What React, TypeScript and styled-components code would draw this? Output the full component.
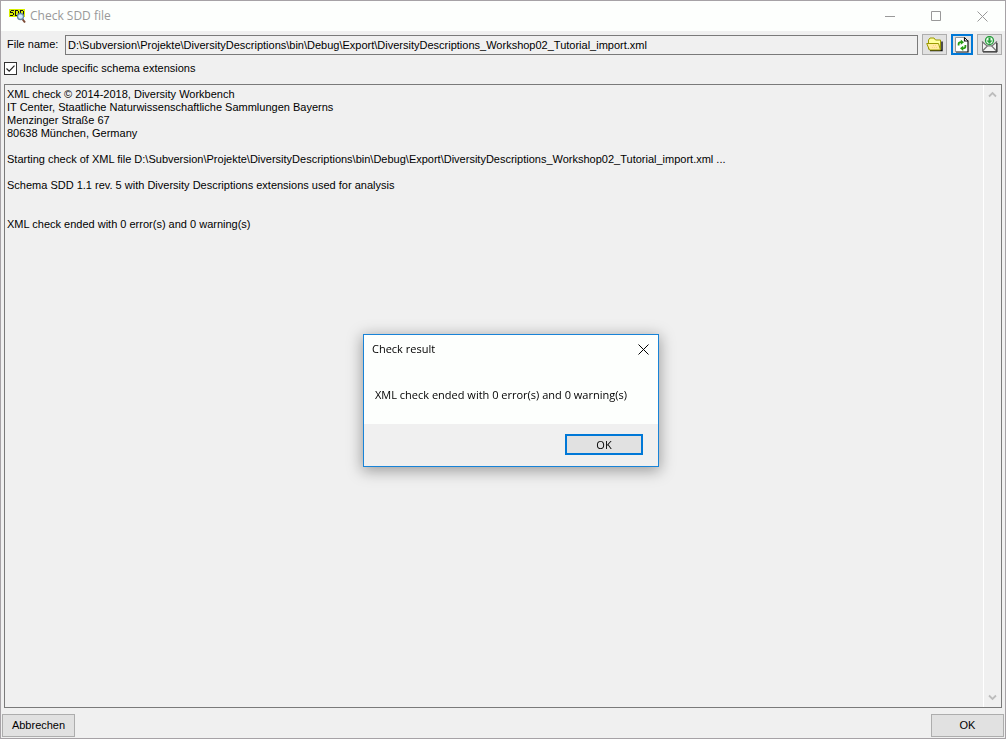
import React, { useState } from "react";
import styled, { createGlobalStyle, css } from "styled-components";

const sans = `"Liberation Sans", Arial, sans-serif`;
const uiSans = `"Open Sans", "Segoe UI", sans-serif`;

const GlobalStyle = createGlobalStyle`
  *, *::before, *::after { box-sizing: border-box; }
  body { margin: 0; background: #f0f0f0; color: #000; font: 11px/13px ${sans}; }
  svg { display: block; flex: none; }
`;

const Window = styled.main`
  min-height: 100vh;
  display: flex;
  flex-direction: column;
  border: 1px solid #a6a2a6;
  background: #f0f0f0;
`;

const TitleBar = styled.header`
  display: flex;
  align-items: center;
  height: 30px;
  padding-left: 8px;
  background: #fdfffd;
  color: #999;
  font: 12px/16px ${uiSans};
`;

const Title = styled.h1`
  flex: 1;
  margin: 0 0 0 4px;
  font: inherit;
`;

const CaptionButton = styled.button<{ $dark?: boolean }>`
  display: flex;
  align-items: center;
  justify-content: center;
  width: ${(p) => (p.$dark ? 30 : 46)}px;
  height: 28px;
  padding: 0;
  border: 0;
  background: none;
  color: ${(p) => (p.$dark ? "#000" : "#999")};
`;

const FileRow = styled.div`
  display: flex;
  align-items: center;
  padding: 3px 3px 0 6px;
`;

const FileLabel = styled.label`
  width: 58px;
  flex: none;
`;

const FileInput = styled.input`
  flex: 1;
  min-width: 0;
  height: 20px;
  padding: 0 2px;
  border: 1px solid #7a7a7a;
  background: #f0f0f0;
  color: #000;
  font: 11px/13px ${sans};
  outline: none;
`;

const Tools = styled.div`
  display: flex;
  gap: 4px;
  margin-left: 4px;
`;

const buttonFace = css<{ $focused?: boolean }>`
  display: flex;
  align-items: center;
  justify-content: center;
  padding: 0;
  border: ${(p) => (p.$focused ? "2px solid #0078d7" : "1px solid #adadad")};
  background: #e1e1e1;
  color: #000;
`;

const ToolButton = styled.button<{ $focused?: boolean }>`
  ${buttonFace}
  width: ${(p) => (p.$focused ? 22 : 25)}px;
  height: 21px;
`;

const OptionRow = styled.label`
  display: flex;
  align-items: center;
  gap: 6px;
  padding: 7px 3px 9px;
`;

const CheckBox = styled.input`
  appearance: none;
  width: 13px;
  height: 13px;
  margin: 0;
  border: 1px solid #333;
  background: #fff;
  &:checked {
    background: #fff
      url("data:image/svg+xml,%3Csvg xmlns='http://www.w3.org/2000/svg' viewBox='0 0 11 11'%3E%3Cpath d='M1.5 5.5l2.7 2.7 5.3-5.6' fill='none' stroke='%23222' stroke-width='1.2'/%3E%3C/svg%3E");
  }
`;

const LogPanel = styled.section`
  flex: 1;
  display: flex;
  min-height: 200px;
  margin: 0 3px;
  border: 1px solid #7a7a7a;
`;

const LogText = styled.textarea`
  flex: 1;
  min-width: 0;
  padding: 3px 2px;
  border: 0;
  background: #f0f0f0;
  color: #000;
  font: 11px/13px ${sans};
  resize: none;
  outline: none;
  overflow: hidden;
`;

const ScrollTrack = styled.div`
  display: flex;
  flex-direction: column;
  justify-content: space-between;
  width: 18px;
  border-left: 1px solid #fff;
`;

const ScrollButton = styled.button`
  display: flex;
  align-items: center;
  justify-content: center;
  height: 19px;
  padding: 0;
  border: 0;
  background: none;
  color: #bdbdbd;
`;

const Footer = styled.footer`
  display: flex;
  justify-content: space-between;
  padding: 6px 1px 1px;
`;

const FooterButton = styled.button`
  ${buttonFace}
  width: 73px;
  height: 23px;
  font: 11px/13px ${sans};
`;

const Overlay = styled.div`
  position: fixed;
  inset: 0;
  display: flex;
  align-items: center;
  justify-content: center;
  padding: 62px 0 0 16px;
  pointer-events: none;
`;

const Dialog = styled.div`
  width: 296px;
  border: 1px solid #1883d7;
  background: #fdfffd;
  box-shadow: 0 3px 14px 1px rgba(0, 0, 0, 0.35);
  font: 11px/16px ${uiSans};
  pointer-events: auto;
`;

const DialogHeader = styled.div`
  display: flex;
  align-items: center;
  justify-content: space-between;
  padding-left: 8px;
`;

const DialogTitle = styled.h2`
  margin: 0;
  font: inherit;
`;

const DialogMessage = styled.p`
  margin: 0;
  padding: 24px 11px 21px;
`;

const DialogActions = styled.div`
  display: flex;
  justify-content: flex-end;
  padding: 10px 15px 11px;
  background: #f0f0f0;
`;

const DialogButton = styled.button<{ $focused?: boolean }>`
  ${buttonFace}
  width: 78px;
  height: 21px;
  font: 11px/16px ${uiSans};
`;

const AppIcon = () => (
  <svg width="17" height="16" viewBox="0 0 17 16" shapeRendering="crispEdges">
    <path d="M0 1h16v8H0z" fill="#d8f000" />
    <path
      d="M2 2h3v1H2zM1 3h1v2H1zM2 4h2v1H2zM4 5h1v2H4zM1 7h3v1H1zM6 2h1v6H6zM7 2h2v1H7zM9 3h1v4H9zM7 7h2v1H7zM11 2h1v6h-1zM12 2h2v1h-2zM14 3h1v4h-1z"
      fill="#111"
    />
    <g shapeRendering="auto">
      <path d="M13 10.5l3 4" stroke="#7b4a35" strokeWidth="2" />
      <circle cx="11.5" cy="8.5" r="3" fill="#cfe9ff" stroke="#6687a5" strokeWidth="1.3" />
    </g>
  </svg>
);

const CrossIcon = ({ size }: { size: number }) => (
  <svg width={size} height={size} viewBox="0 0 11 11">
    <path d="M.5.5l10 10M10.5.5l-10 10" stroke="currentColor" fill="none" />
  </svg>
);

const FolderIcon = () => (
  <svg width="17" height="15" viewBox="0 0 17 15">
    <path d="M4 13.5h12V4.5" fill="none" stroke="#111" strokeWidth="1.4" />
    <path d="M2.5 12V3l1.5-2h4l1.5 2h5v9.5h-11z" fill="#ffff9c" stroke="#9a9a00" />
    <path d="M.7 6.5h11.8l2 6.5H3.5z" fill="#ffee9c" stroke="#9a9a00" />
    <path d="M7 8.5h4M6 10.5h6" stroke="#ffc890" strokeDasharray="1 1" />
  </svg>
);

const RefreshIcon = () => (
  <svg width="14" height="16" viewBox="0 0 14 16">
    <path d="M1 .5h8.5L13 4v11H1z" fill="#fff" />
    <path d="M.5 15V.5H10" fill="none" stroke="#999" />
    <path d="M9.5.5V4H13v11H1" fill="none" stroke="#111" strokeWidth="1.2" />
    <path d="M9.5.5L13 4" stroke="#111" />
    <path d="M3.6 8.5V7Q3.6 5.2 6 5.2M10.4 8v1.5q0 1.8-2.4 1.8" fill="none" stroke="#279b12" strokeWidth="1.8" />
    <path d="M5.8 2.6v5.2L9 5.2zM8.2 8.7v5.2L5 11.3z" fill="#279b12" />
  </svg>
);

const MailIcon = () => (
  <svg width="17" height="17" viewBox="0 0 17 17">
    <path d="M1.5 6v9.5h14V6" fill="#f4f4f4" stroke="#777" />
    <path d="M1 5.5l5.8 5M16 5.5l-5.8 5M1.5 15l5-5.2h4l5 5.2" fill="none" stroke="#777" strokeWidth="1.3" />
    <path d="M2 16h14V7" fill="none" stroke="#222" />
    <circle cx="8.5" cy="4.5" r="4" fill="#eaffea" stroke="#279b3c" strokeWidth="1.3" />
    <path d="M7.5 1.5h2v3h2l-3 3.2-3-3.2h2z" fill="#279b3c" />
  </svg>
);

const Chevron = ({ down }: { down?: boolean }) => (
  <svg width="9" height="7" viewBox="0 0 9 7">
    <path d={down ? "M1 1.5L4.5 5 8 1.5" : "M1 5.5L4.5 2 8 5.5"} fill="none" stroke="currentColor" strokeWidth="1.8" />
  </svg>
);

const filePath =
  "D:\\Subversion\\Projekte\\DiversityDescriptions\\bin\\Debug\\Export\\DiversityDescriptions_Workshop02_Tutorial_import.xml";
const result = "XML check ended with 0 error(s) and 0 warning(s)";
const log = [
  "XML check © 2014-2018, Diversity Workbench",
  "IT Center, Staatliche Naturwissenschaftliche Sammlungen Bayerns",
  "Menzinger Straße 67",
  "80638 München, Germany",
  "",
  `Starting check of XML file ${filePath} ...`,
  "",
  "Schema SDD 1.1 rev. 5 with Diversity Descriptions extensions used for analysis",
  "",
  "",
  result,
].join("\n");

export default function App() {
  const [extensions, setExtensions] = useState(true);
  const [dialogOpen, setDialogOpen] = useState(true);
  const closeDialog = () => setDialogOpen(false);

  return (
    <>
      <GlobalStyle />
      <Window>
        <TitleBar>
          <AppIcon />
          <Title>Check SDD file</Title>
          <CaptionButton aria-label="Minimize">
            <svg width="10" height="1"><path d="M0 .5h10" stroke="currentColor" /></svg>
          </CaptionButton>
          <CaptionButton aria-label="Maximize">
            <svg width="10" height="10"><path d="M.5.5h9v9h-9z" fill="none" stroke="currentColor" /></svg>
          </CaptionButton>
          <CaptionButton aria-label="Close"><CrossIcon size={11} /></CaptionButton>
        </TitleBar>
        <FileRow>
          <FileLabel htmlFor="file-name">File name:</FileLabel>
          <FileInput id="file-name" readOnly value={filePath} />
          <Tools>
            <ToolButton aria-label="Open file"><FolderIcon /></ToolButton>
            <ToolButton aria-label="Check file" $focused onClick={() => setDialogOpen(true)}><RefreshIcon /></ToolButton>
            <ToolButton aria-label="Send feedback"><MailIcon /></ToolButton>
          </Tools>
        </FileRow>
        <OptionRow>
          <CheckBox type="checkbox" checked={extensions} onChange={(e) => setExtensions(e.target.checked)} />
          Include specific schema extensions
        </OptionRow>
        <LogPanel>
          <LogText aria-label="Check log" readOnly value={log} />
          <ScrollTrack>
            <ScrollButton aria-label="Scroll up"><Chevron /></ScrollButton>
            <ScrollButton aria-label="Scroll down"><Chevron down /></ScrollButton>
          </ScrollTrack>
        </LogPanel>
        <Footer>
          <FooterButton>Abbrechen</FooterButton>
          <FooterButton>OK</FooterButton>
        </Footer>
      </Window>
      {dialogOpen && (
        <Overlay>
          <Dialog role="dialog" aria-labelledby="result-title">
            <DialogHeader>
              <DialogTitle id="result-title">Check result</DialogTitle>
              <CaptionButton $dark aria-label="Close dialog" onClick={closeDialog}><CrossIcon size={11} /></CaptionButton>
            </DialogHeader>
            <DialogMessage>{result}</DialogMessage>
            <DialogActions>
              <DialogButton $focused onClick={closeDialog}>OK</DialogButton>
            </DialogActions>
          </Dialog>
        </Overlay>
      )}
    </>
  );
}
